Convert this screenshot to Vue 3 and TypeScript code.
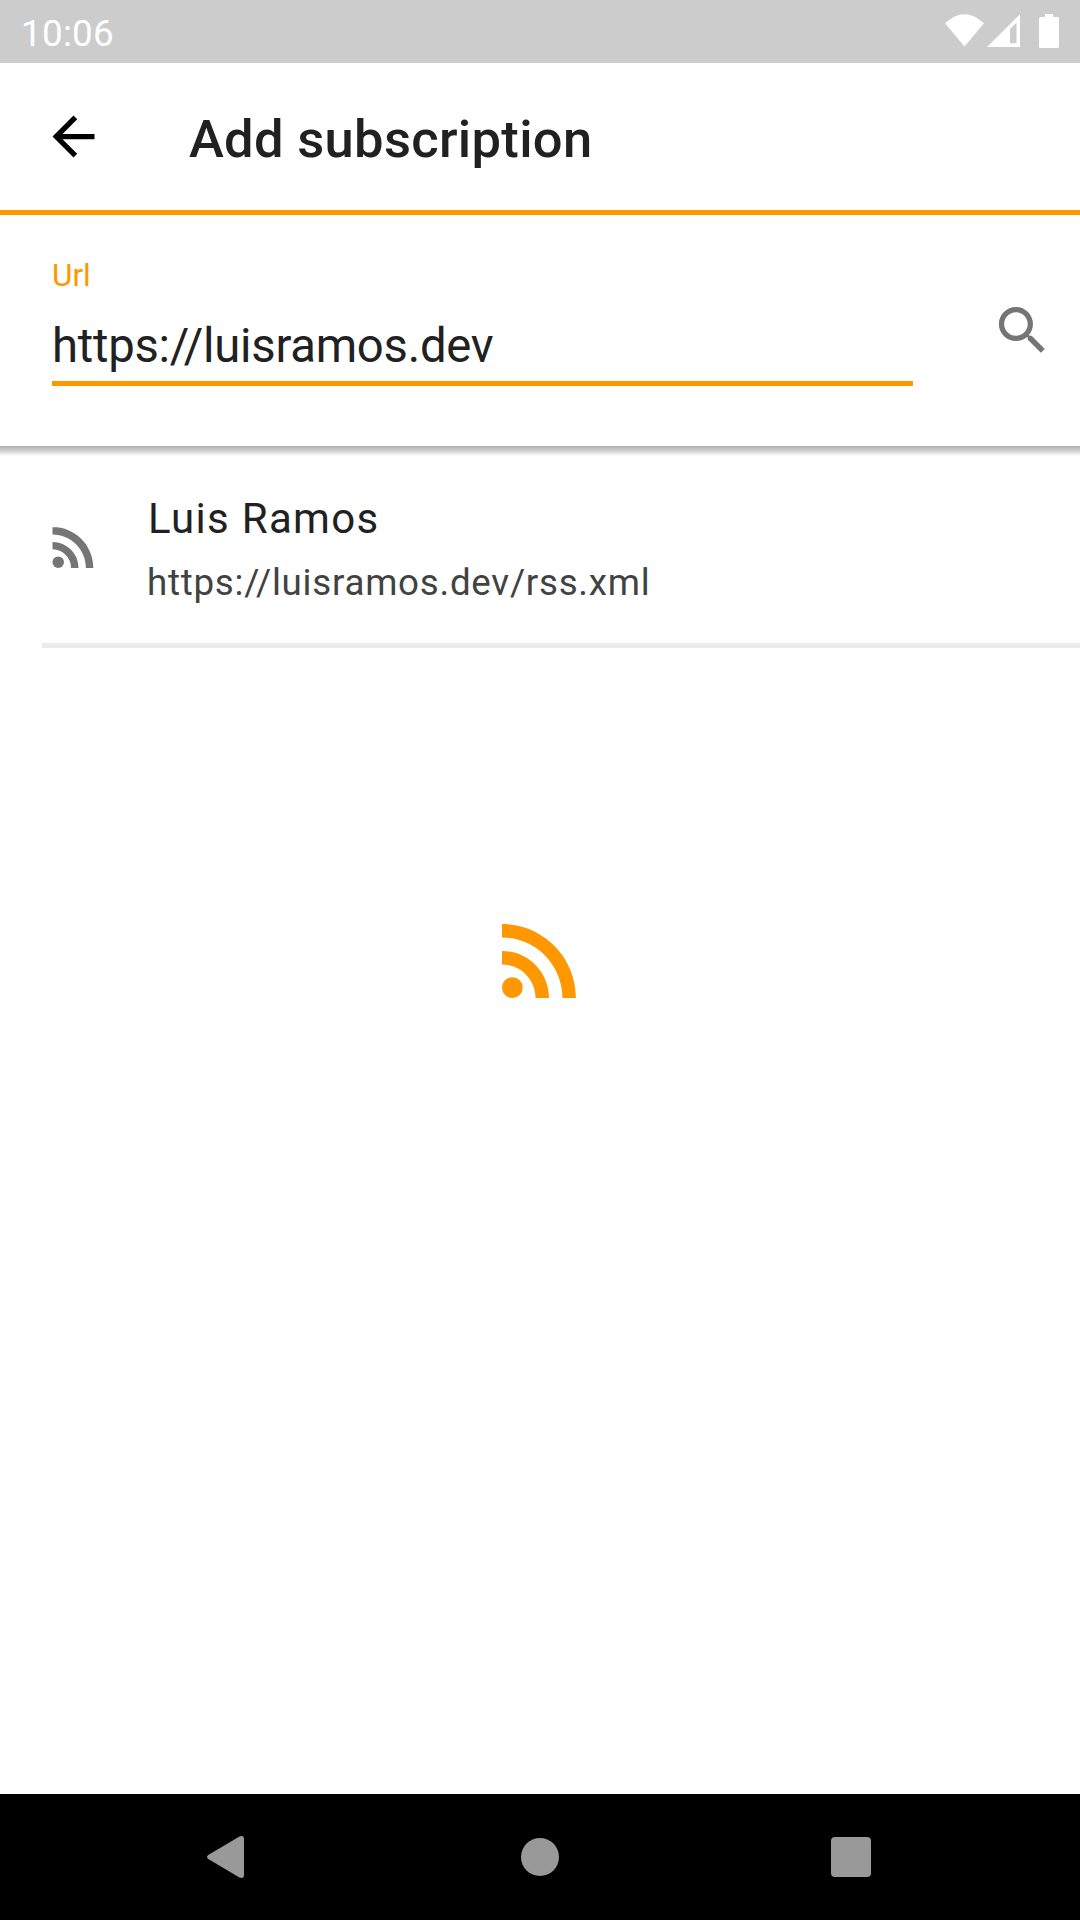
<script setup lang="ts">
import { ref } from 'vue'

interface Feed {
  title: string
  link: string
}

const url = ref<string>('https://luisramos.dev')
const feeds = ref<Feed[]>([
  { title: 'Luis Ramos', link: 'https://luisramos.dev/rss.xml' },
])
const rssPath =
  'M4 4.44v2.83c7.03 0 12.73 5.7 12.73 12.73h2.83c0-8.59-6.97-15.56-15.56-15.56zm0 5.66v2.83c3.9 0 7.07 3.17 7.07 7.07h2.83c0-5.47-4.43-9.9-9.9-9.9z'
</script>

<template>
  <div class="screen">
    <div class="status">
      <span class="clock">10:06</span>
      <svg class="indicators" width="120" height="63" viewBox="0 0 120 63">
        <path d="M5 23.3Q24.500 5 44 23.300L24.500 46.500Z" />
        <path fill-rule="evenodd" d="M47 47L80 14.300V47ZM70 29V43.200H76.500V22.500Z" />
        <path d="M105 14h8v3h4.500q1.500 0 1.500 1.500v28q0 1.500-1.500 1.500h-17q-1.500 0-1.500-1.500v-28q0-1.500 1.500-1.500h4.500z" />
      </svg>
    </div>

    <header class="toolbar">
      <svg class="back" width="63" height="63" viewBox="0 0 24 24">
        <path d="M20 11H7.830l5.590-5.590L12 4l-8 8 8 8 1.410-1.410L7.830 13H20v-2z" />
      </svg>
      <h1 class="heading">Add subscription</h1>
    </header>

    <section class="search">
      <label class="field">
        <span class="label">Url</span>
        <span class="value">{{ url }}</span>
      </label>
      <svg class="magnifier" width="63" height="63" viewBox="0 0 24 24">
        <path
          d="M15.500 14h-.79l-.28-.27C15.410 12.590 16 11.110 16 9.500 16 5.910 13.090 3 9.500 3S3 5.910 3 9.500 5.910 16 9.500 16c1.610 0 3.090-.59 4.230-1.570l.27.28v.79l5 4.990L20.490 19l-4.990-5zm-6 0C7.010 14 5 11.990 5 9.500S7.010 5 9.500 5 14 7.010 14 9.500 11.990 14 9.500 14z"
        />
      </svg>
    </section>

    <main class="content">
      <div class="edge"></div>
      <article v-for="feed in feeds" :key="feed.link" class="feed">
        <svg class="feed-icon" width="63" height="63" viewBox="0 -0.15 24 24">
          <circle cx="6.180" cy="17.820" r="2.180" />
          <path :d="rssPath" />
        </svg>
        <div class="feed-text">
          <div class="feed-title">{{ feed.title }}</div>
          <div class="feed-link">{{ feed.link }}</div>
        </div>
      </article>
      <div class="divider"></div>
    </main>

    <nav class="navbar">
      <svg width="1080" height="126" viewBox="0 0 1080 126">
        <path d="M208.200 61L239.500 42.500Q244 41 244 45V81Q244 85 239.500 83.500L208.200 65Q205.800 63 208.200 61Z" />
        <circle cx="540" cy="63" r="19" />
        <rect x="831" y="43" width="40" height="40" rx="4" />
      </svg>
    </nav>

    <svg class="splash" width="114" height="114" viewBox="0 0 24 24">
      <circle cx="6.180" cy="17.820" r="2.180" />
      <path :d="rssPath" />
    </svg>
  </div>
</template>

<style>
body {
  margin: 0;
  background: #fff;
}
</style>

<style scoped>
.screen {
  position: relative;
  display: flex;
  flex-direction: column;
  width: 1080px;
  height: 1920px;
  overflow: hidden;
  background: #fff;
  color: #212121;
  font-family: Roboto, 'Liberation Sans', sans-serif;
}
svg {
  display: block;
  flex: none;
}
.status {
  display: flex;
  justify-content: space-between;
  height: 63px;
  padding-left: 21px;
  padding-right: 20px;
  background: #ccc;
  color: #fff;
}
.clock {
  font-size: 36.75px;
  line-height: 67px;
  letter-spacing: 0.3px;
}
.indicators {
  fill: #fff;
}
.toolbar {
  display: flex;
  align-items: center;
  box-sizing: border-box;
  height: 152px;
  padding-left: 42px;
  border-bottom: 5px solid #ff9800;
}
.back {
  fill: #000;
}
.heading {
  margin: 5px 0 0 84px;
  font-size: 52.5px;
  font-weight: 500;
  line-height: 62px;
  letter-spacing: 0.31px;
}
.search {
  display: flex;
  justify-content: space-between;
  box-sizing: border-box;
  height: 231px;
  padding: 40px 26px 0 52px;
}
.field {
  display: flex;
  flex-direction: column;
  box-sizing: border-box;
  width: 861px;
  height: 131px;
  border-bottom: 5px solid #ff9800;
}
.label {
  margin-top: 1px;
  font-size: 31.5px;
  line-height: 39px;
  color: #ff9800;
}
.value {
  margin-top: 21px;
  font-size: 47.25px;
  line-height: 60px;
  letter-spacing: -0.26px;
}
.magnifier {
  margin-top: 44px;
  fill: #757575;
}
.content {
  flex: 1;
}
.edge {
  height: 10px;
  background: linear-gradient(#adadad, #c8c8c8 35%, #e5e5e5 70%, #fff);
}
.feed {
  display: flex;
  height: 187px;
  padding-left: 42px;
}
.feed-icon {
  margin-top: 59px;
  fill: #757575;
}
.feed-text {
  margin: 38px 0 0 42px;
}
.feed-title {
  padding-left: 1px;
  font-size: 42px;
  line-height: 49px;
  letter-spacing: 0.03125em;
}
.feed-link {
  margin-top: 18px;
  font-size: 36.75px;
  line-height: 43px;
  letter-spacing: 0.73px;
  color: #424242;
}
.divider {
  height: 5px;
  margin-left: 42px;
  background: #ebebeb;
}
.navbar {
  height: 126px;
  background: #000;
  fill: #999;
}
.splash {
  position: absolute;
  top: 903px;
  left: 483px;
  fill: #ff9800;
}
</style>
